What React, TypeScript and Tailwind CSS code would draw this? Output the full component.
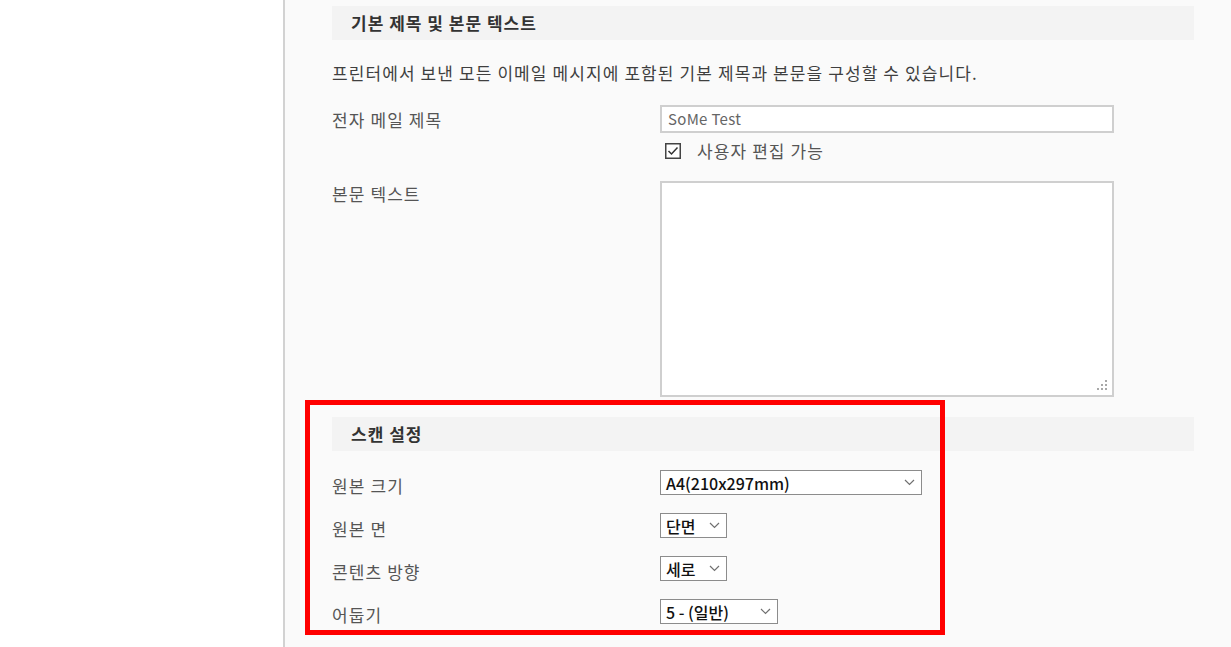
const font = "font-['Noto_Sans_CJK_KR','Noto_Sans',sans-serif]";

function Chevron() {
  return (
    <svg width="11" height="7" viewBox="0 0 11 7" className="shrink-0">
      <polyline points="1,1 5.5,5.5 10,1" fill="none" stroke="#707070" strokeWidth="1.2" />
    </svg>
  );
}

function Select({ value, width }: { value: string; width: string }) {
  return (
    <div
      className={`${width} h-[25px] flex items-center justify-between border border-[#8c8c8c] bg-white pl-[5px] pr-[6px] text-[16px] font-medium text-[#111] leading-none`}
    >
      <span>{value}</span>
      <Chevron />
    </div>
  );
}

function SectionHeader({ title }: { title: string }) {
  return (
    <div className="h-[34px] bg-[#f3f3f3] pl-[19px] flex items-center text-[17px] font-bold tracking-[1px] text-[#333]">
      {title}
    </div>
  );
}

function Grip() {
  const dots = [
    [9, 1],
    [5, 5],
    [9, 5],
    [1, 9],
    [5, 9],
    [9, 9],
  ];
  return (
    <svg width="12" height="12" viewBox="0 0 12 12" className="absolute right-[4px] bottom-[4px]">
      {dots.map(([x, y], i) => (
        <rect key={i} x={x} y={y} width="2" height="2" fill="#a8a8a8" />
      ))}
    </svg>
  );
}

export default function App() {
  const scanRows = [
    { label: "원본 크기", value: "A4(210x297mm)", width: "w-[262px]" },
    { label: "원본 면", value: "단면", width: "w-[67px]" },
    { label: "콘텐츠 방향", value: "세로", width: "w-[67px]" },
    { label: "어둡기", value: "5 - (일반)", width: "w-[118px]" },
  ];

  return (
    <div className={`relative flex h-[647px] w-[1231px] overflow-hidden bg-white ${font}`}>
      <div className="w-[285px] shrink-0 border-r-2 border-[#d2d2d2] bg-white" />
      <div className="flex-1 bg-[#fafafa] pl-[47px] pr-[37px] pt-[6px]">
        <SectionHeader title="기본 제목 및 본문 텍스트" />
        <p className="mt-[21px] text-[17px] leading-[24px] tracking-[1.1px] text-[#3f3f3f] whitespace-nowrap">
          프린터에서 보낸 모든 이메일 메시지에 포함된 기본 제목과 본문을 구성할 수 있습니다.
        </p>

        <div className="mt-[20px] flex">
          <div className="w-[328px] shrink-0 pt-[3px] text-[17px] leading-[24px] tracking-[1.1px] text-[#555]">
            전자 메일 제목
          </div>
          <div className="flex flex-col">
            <div className="w-[454px] h-[28px] border-2 border-[#cfcfcf] bg-white pl-[6px] flex items-center text-[15px] tracking-[0.3px] text-[#666]">
              SoMe Test
            </div>
            <div className="mt-[8px] h-[20px] flex items-center pl-[5px]">
              <svg width="16" height="16" viewBox="0 0 16 16">
                <rect x="0.75" y="0.75" width="14.5" height="14.5" fill="white" stroke="#444" strokeWidth="1.5" />
                <polyline points="3.5,8 6.5,11 12.5,4.5" fill="none" stroke="#333" strokeWidth="1.5" />
              </svg>
              <span className="ml-[16px] text-[17px] leading-[20px] tracking-[1.1px] text-[#555]">사용자 편집 가능</span>
            </div>
          </div>
        </div>

        <div className="mt-[20px] flex">
          <div className="w-[328px] shrink-0 pt-[1px] text-[17px] leading-[24px] tracking-[1.1px] text-[#555]">
            본문 텍스트
          </div>
          <div className="relative w-[454px] h-[216px] border-2 border-[#cfcfcf] bg-white">
            <Grip />
          </div>
        </div>

        <div className="mt-[20px]">
          <SectionHeader title="스캔 설정" />
        </div>

        <div className="mt-[19px] flex flex-col gap-[18px]">
          {scanRows.map((row) => (
            <div key={row.label} className="flex h-[25px]">
              <div className="w-[328px] shrink-0 pt-[4px] text-[17px] leading-[24px] tracking-[1.1px] text-[#555]">
                {row.label}
              </div>
              <Select value={row.value} width={row.width} />
            </div>
          ))}
        </div>
      </div>

      <div className="absolute left-[305px] top-[400px] w-[640px] h-[235px] border-[5px] border-[#ff0000] pointer-events-none" />
    </div>
  );
}
